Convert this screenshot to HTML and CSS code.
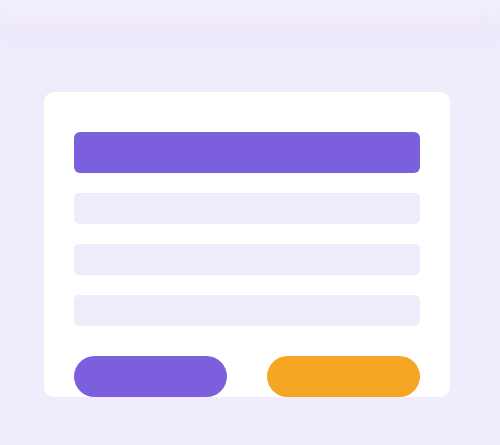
FILE: index.html
```html
<!DOCTYPE html>
<html>
<head>
<meta charset="utf-8">
<link rel="stylesheet" href="styles.css">
</head>
<body>
<div class="topband"></div>
<main class="page">
  <section class="card">
    <div class="bar"></div>
    <div class="field"></div>
    <div class="field"></div>
    <div class="field"></div>
    <div class="actions">
      <div class="btn btn-primary"></div>
      <div class="btn btn-accent"></div>
    </div>
  </section>
</main>
</body>
</html>
```
FILE: styles.css
```css
html, body {
  margin: 0;
  padding: 0;
}
body {
  background: #f0ecfc;
  width: 500px;
  height: 445px;
  overflow: hidden;
  font-family: "Liberation Sans", Arial, sans-serif;
}
.topband {
  height: 62px;
  margin: -20px 0 0 0;
  background: linear-gradient(to bottom, rgba(244,241,254,0.8) 0%, rgba(244,241,254,0.6) 40%, rgba(232,226,247,0.35) 75%, rgba(230,223,246,0.45) 92%, rgba(240,236,252,0) 100%);
  filter: blur(6px);
}
.page {
  padding: 50px 50px 0 44px;
}
.card {
  width: 346px;
  height: 265px;
  background: #ffffff;
  border-radius: 10px;
  padding: 40px 30px 0 30px;
  display: flex;
  flex-direction: column;
  gap: 20px;
}
.bar {
  height: 41px;
  background: #7c5fdd;
  border-radius: 6px;
}
.field {
  height: 31px;
  background: #efebfb;
  border-radius: 5px;
}
.actions {
  margin-top: 10px;
  display: flex;
  justify-content: space-between;
}
.btn {
  width: 153px;
  height: 41px;
  border-radius: 21px;
}
.btn-primary {
  background: #7c5fdd;
}
.btn-accent {
  background: #f5a724;
}
```
